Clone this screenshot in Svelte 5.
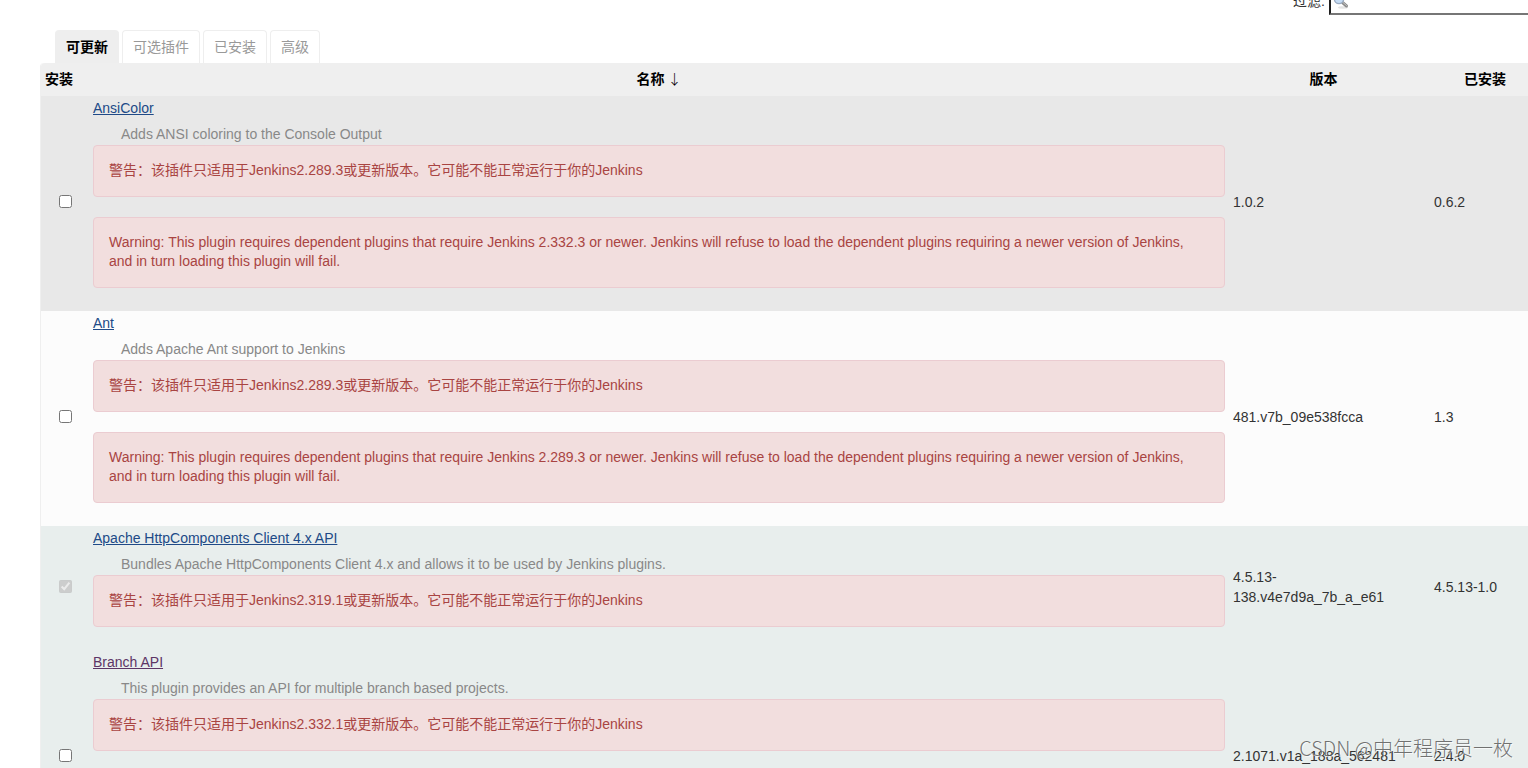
<script>
  const tabs = ['可更新', '可选插件', '已安装', '高级'];
  const core = (v) => `警告：该插件只适用于Jenkins${v}或更新版本。它可能不能正常运行于你的Jenkins`;
  const deps = (v) =>
    `Warning: This plugin requires dependent plugins that require Jenkins ${v} or newer. Jenkins will refuse to load the dependent plugins requiring a newer version of Jenkins, and in turn loading this plugin will fail.`;

  const plugins = [
    { id: 'ansicolor', name: 'AnsiColor', about: 'Adds ANSI coloring to the Console Output', alerts: [core('2.289.3'), deps('2.332.3')], version: '1.0.2', installed: '0.6.2', tone: 'hover' },
    { id: 'ant', name: 'Ant', about: 'Adds Apache Ant support to Jenkins', alerts: [core('2.289.3'), deps('2.289.3')], version: '481.v7b_09e538fcca', installed: '1.3', tone: 'plain' },
    { id: 'httpclient', name: 'Apache HttpComponents Client 4.x API', about: 'Bundles Apache HttpComponents Client 4.x and allows it to be used by Jenkins plugins.', alerts: [core('2.319.1')], version: '4.5.13-138.v4e7d9a_7b_a_e61', installed: '4.5.13-1.0', tone: 'tinted', locked: true },
    { id: 'branch-api', name: 'Branch API', about: 'This plugin provides an API for multiple branch based projects.', alerts: [core('2.332.1')], version: '2.1071.v1a_188a_562481', installed: '2.4.0', tone: 'tinted', visited: true, tall: true }
  ];
</script>

<div class="page">
  <div class="filter">
    <label for="filter">过滤:</label>
    <div class="search">
      <input id="filter" type="text" />
      <svg class="lens" viewBox="0 0 16 16" aria-hidden="true">
        <ellipse cx="10" cy="14.5" rx="5" ry="1.2" fill="#e4e4e4" />
        <path d="M9.5 9.5L13.5 13" stroke="#8b8b8b" stroke-width="3" stroke-linecap="round" />
        <path d="M10 9.5L13.5 12.5" stroke="#c4c4c4" stroke-width="1" stroke-linecap="round" />
        <circle cx="6" cy="6" r="4.6" fill="#c5dcf5" stroke="#9aabc2" stroke-width="1.4" />
        <path d="M3.4 6A2.8 2.8 0 0 1 7 3.4" fill="none" stroke="#f4f9ff" stroke-width="1.4" />
      </svg>
    </div>
  </div>

  <main>
    <nav class="tabs">
      {#each tabs as tab, i}
        <a href="#{tab}" class:active={i === 0}>{tab}</a>
      {/each}
    </nav>
    <table>
      <colgroup>
        <col class="c-check" /><col /><col class="c-version" /><col class="c-installed" />
      </colgroup>
      <thead>
        <tr>
          <th class="first">安装</th>
          <th>名称<span class="arrow">&nbsp;↓</span></th>
          <th>版本<span class="spare"></span></th>
          <th class="last">已安装</th>
        </tr>
      </thead>
      <tbody>
        {#each plugins as p}
          <tr class={p.tone} class:tall={p.tall}>
            <td class="check">
              <input type="checkbox" id={p.id} aria-label={p.name} checked={p.locked} disabled={p.locked} />
            </td>
            <td class="details">
              <a href="#{p.id}" class:visited={p.visited}>{p.name}</a>
              <p class="about">{p.about}</p>
              {#each p.alerts as alert}
                <div class="alert">{alert}</div>
              {/each}
            </td>
            <td>{p.version}</td>
            <td>{p.installed}</td>
          </tr>
        {/each}
      </tbody>
    </table>
  </main>
  <div class="watermark">CSDN @中年程序员一枚</div>
</div>

<style>
  :global(body) {
    margin: 0;
    background: #fff;
  }
  .page {
    position: relative;
    height: 100vh;
    overflow: hidden;
    font: 14px/20px 'Liberation Sans', 'Noto Sans CJK SC', sans-serif;
    color: #333;
  }
  .filter {
    display: flex;
    justify-content: flex-end;
    align-items: flex-end;
    gap: 4px;
    height: 15px;
    overflow: hidden;
  }
  .filter label {
    padding-bottom: 4px;
  }
  .search {
    position: relative;
    width: 199px;
    height: 26px;
  }
  .search input {
    box-sizing: border-box;
    width: 100%;
    height: 100%;
    border: 2px solid #767676;
    border-right: 0;
    border-left-color: #1f1f1f;
    padding: 0 0 0 22px;
    background: #fff;
  }
  .lens {
    position: absolute;
    left: 4px;
    bottom: 6px;
    width: 16px;
    height: 16px;
  }
  main {
    padding: 15px 0 0 40px;
  }
  .tabs {
    display: flex;
    gap: 3px;
    padding-left: 15px;
  }
  .tabs a {
    border: 1px solid #eee;
    border-bottom: 0;
    border-radius: 4px 4px 0 0;
    padding: 6px 10px;
    color: #999;
    text-decoration: none;
  }
  .tabs a.active {
    background: #eee;
    color: #000;
    font-weight: bold;
  }
  table {
    width: 100%;
    table-layout: fixed;
    border-collapse: separate;
    border-spacing: 0;
    border-left: 1px solid #efefef;
    border-radius: 4px 0 0 0;
  }
  .c-check {
    width: 48px;
  }
  .c-version {
    width: 201px;
  }
  .c-installed {
    width: 98px;
  }
  thead tr {
    height: 33px;
  }
  th {
    padding: 0 0 2px;
    background: #efefef;
    color: #000;
    text-align: center;
  }
  .first {
    padding-left: 4px;
    border-radius: 4px 0 0 0;
    text-align: left;
  }
  .last {
    padding-left: 12px;
  }
  .arrow {
    font-family: 'Noto Sans CJK SC', sans-serif;
    font-weight: 300;
    line-height: 1;
  }
  .spare {
    display: inline-block;
    width: 12px;
  }
  td {
    padding: 0 4px 3px;
    vertical-align: middle;
  }
  .check {
    padding: 0 0 4px;
    text-align: center;
  }
  .check input {
    display: block;
    width: 13px;
    height: 13px;
    margin: 0 auto;
  }
  .details {
    padding: 2px 4px 23px;
    vertical-align: top;
  }
  .details a {
    display: inline-block;
    color: #204a87;
  }
  .details a.visited {
    color: #5c3566;
  }
  .about {
    margin: 6px 0 1px 28px;
    color: #888;
  }
  .alert {
    border: 1px solid #ebccd1;
    border-radius: 4px;
    padding: 15px 15px 16px;
    background: #f2dede;
    color: #a94442;
    line-height: 19px;
  }
  .alert + .alert {
    margin-top: 20px;
  }
  .hover {
    background: #e8e8e8;
  }
  .plain {
    background: #fcfcfc;
  }
  .tinted {
    background: #e8eeed;
  }
  .tall {
    height: 215px;
  }
  .watermark {
    position: absolute;
    right: 15px;
    bottom: 6px;
    font-family: 'Noto Sans CJK SC', sans-serif;
    font-weight: 300;
    font-size: 20px;
    line-height: 28px;
    color: rgba(90, 90, 90, 0.85);
    text-shadow: 1px 1px 0 rgba(255, 255, 255, 0.7);
    pointer-events: none;
  }
</style>
